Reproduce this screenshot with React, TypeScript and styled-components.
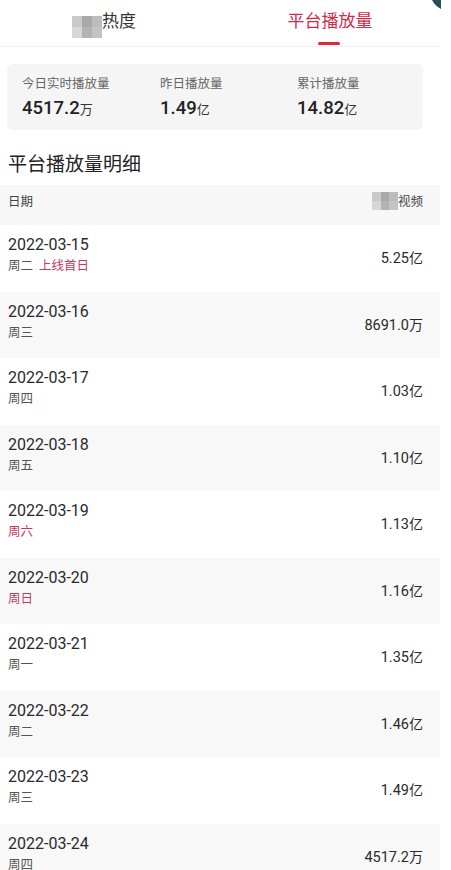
import React from "react";
import styled, { createGlobalStyle } from "styled-components";

const Global = createGlobalStyle`
  html, body { margin: 0; padding: 0; background: #fff; }
  body { font-family: Roboto, "Noto Sans CJK SC", sans-serif; color: #222; }
`;

const RED = "#d52a45";
const PINK = "#c73a5c";

const Page = styled.div`
  position: relative;
  width: 440px;
  background: #fff;
`;

const Corner = styled.svg`
  position: absolute;
  top: 0;
  left: 432px;
`;

const TabBar = styled.div`
  display: grid;
  grid-template-columns: 1fr 1fr;
  height: 46px;
  border-bottom: 1px solid #efefef;
`;

const Tab = styled.div<{ $active?: boolean; $shift?: number }>`
  position: relative;
  display: flex;
  justify-content: center;
  align-items: flex-start;
  padding-top: 8px;
  padding-right: ${(p) => p.$shift ?? 0}px;
  font-size: 17px;
  line-height: 24px;
  color: ${(p) => (p.$active ? RED : "#333")};
  font-family: "Noto Sans CJK SC", sans-serif;
  box-sizing: border-box;
`;

const Underline = styled.span`
  position: absolute;
  top: 42px;
  left: 50%;
  width: 22px;
  margin-left: -12px;
  height: 3px;
  border-radius: 2px;
  background: #e2263a;
`;

const Mosaic = styled.span<{ $w: number; $h: number }>`
  display: inline-grid;
  grid-template-columns: repeat(3, 1fr);
  grid-template-rows: repeat(2, 1fr);
  width: ${(p) => p.$w}px;
  height: ${(p) => p.$h}px;
  align-self: center;
  filter: blur(0.6px);
`;

const Cell = styled.span<{ $c: string }>`
  background: ${(p) => p.$c};
`;

const Card = styled.div`
  margin: 17px 17px 0 7px;
  background: #f5f5f5;
  border-radius: 6px;
  padding: 10px 0 9px 15px;
  display: grid;
  grid-template-columns: 138px 137px 1fr;
`;

const Stat = styled.div`
  display: flex;
  flex-direction: column;
  gap: 4px;
`;

const StatLabel = styled.div`
  font-family: "Noto Sans CJK SC", sans-serif;
  font-size: 12.5px;
  line-height: 18px;
  color: #666;
`;

const StatValue = styled.div`
  font-size: 18.5px;
  line-height: 24px;
  font-weight: 500;
  color: #222;
`;

const Unit = styled.span`
  font-family: "Noto Sans CJK SC", sans-serif;
  font-size: 13px;
  font-weight: 400;
  color: #333;
`;

const SectionTitle = styled.h2`
  margin: 20px 0 9px 8px;
  font-family: "Noto Sans CJK SC", sans-serif;
  font-size: 19px;
  line-height: 26px;
  font-weight: 400;
  color: #222;
`;

const HeaderRow = styled.div`
  height: 40px;
  box-sizing: border-box;
  background: #f7f7f7;
  display: flex;
  justify-content: space-between;
  align-items: flex-start;
  padding: 7px 17px 0 8px;
  font-family: "Noto Sans CJK SC", sans-serif;
  font-size: 12.5px;
  line-height: 18px;
  color: #444;
`;

const HeaderRight = styled.div`
  display: flex;
  align-items: center;
`;

const Row = styled.div<{ $gray: boolean }>`
  height: 66.5px;
  box-sizing: border-box;
  background: ${(p) => (p.$gray ? "#f8f8f8" : "#fff")};
  display: flex;
  justify-content: space-between;
  align-items: center;
  padding: 0 17px 0 8px;
`;

const DateBlock = styled.div`
  align-self: flex-start;
  padding-top: 9px;
  display: flex;
  flex-direction: column;
`;

const DateText = styled.div`
  font-size: 16px;
  line-height: 22px;
  color: #2a2a2a;
`;

const Weekday = styled.div<{ $weekend?: boolean }>`
  font-family: "Noto Sans CJK SC", sans-serif;
  font-size: 12.5px;
  line-height: 18px;
  color: ${(p) => (p.$weekend ? PINK : "#555")};
`;

const Tag = styled.span`
  color: ${PINK};
  margin-left: 6px;
`;

const Value = styled.div`
  font-size: 14.5px;
  line-height: 20px;
  color: #2a2a2a;
`;

const mosaicColors = ["#c9c9c9", "#a9a9a9", "#bdbdbd", "#d7d7d7", "#b3b3b3", "#c4c4c4"];

const rows = [
  { date: "2022-03-15", wd: "周二", tag: "上线首日", v: "5.25", u: "亿" },
  { date: "2022-03-16", wd: "周三", v: "8691.0", u: "万" },
  { date: "2022-03-17", wd: "周四", v: "1.03", u: "亿" },
  { date: "2022-03-18", wd: "周五", v: "1.10", u: "亿" },
  { date: "2022-03-19", wd: "周六", we: true, v: "1.13", u: "亿" },
  { date: "2022-03-20", wd: "周日", we: true, v: "1.16", u: "亿" },
  { date: "2022-03-21", wd: "周一", v: "1.35", u: "亿" },
  { date: "2022-03-22", wd: "周二", v: "1.46", u: "亿" },
  { date: "2022-03-23", wd: "周三", v: "1.49", u: "亿" },
  { date: "2022-03-24", wd: "周四", v: "4517.2", u: "万" },
];

const ValueUnit = styled.span`
  font-family: "Noto Sans CJK SC", sans-serif;
  font-size: 14px;
`;

export default function App() {
  return (
    <Page>
      <Global />
      <Corner width="9" height="10" viewBox="0 0 9 10">
        <path d="M0 0 L9 0 L9 9 Q3 6 0 0 Z" fill="#2d4954" />
      </Corner>
      <TabBar>
        <Tab $shift={12}>
          <Mosaic $w={30} $h={22}>
            {mosaicColors.map((c, i) => (
              <Cell key={i} $c={c} />
            ))}
          </Mosaic>
          热度
        </Tab>
        <Tab $active>
          平台播放量
          <Underline />
        </Tab>
      </TabBar>
      <Card>
        <Stat>
          <StatLabel>今日实时播放量</StatLabel>
          <StatValue>
            4517.2<Unit>万</Unit>
          </StatValue>
        </Stat>
        <Stat>
          <StatLabel>昨日播放量</StatLabel>
          <StatValue>
            1.49<Unit>亿</Unit>
          </StatValue>
        </Stat>
        <Stat>
          <StatLabel>累计播放量</StatLabel>
          <StatValue>
            14.82<Unit>亿</Unit>
          </StatValue>
        </Stat>
      </Card>
      <SectionTitle>平台播放量明细</SectionTitle>
      <HeaderRow>
        <span>日期</span>
        <HeaderRight>
          <Mosaic $w={26} $h={18}>
            {mosaicColors.map((c, i) => (
              <Cell key={i} $c={c} />
            ))}
          </Mosaic>
          视频
        </HeaderRight>
      </HeaderRow>
      {rows.map((r, i) => (
        <Row key={r.date} $gray={i % 2 === 1}>
          <DateBlock>
            <DateText>{r.date}</DateText>
            <Weekday $weekend={r.we}>
              {r.wd}
              {r.tag && <Tag>{r.tag}</Tag>}
            </Weekday>
          </DateBlock>
          <Value>
            {r.v}
            <ValueUnit>{r.u}</ValueUnit>
          </Value>
        </Row>
      ))}
    </Page>
  );
}
